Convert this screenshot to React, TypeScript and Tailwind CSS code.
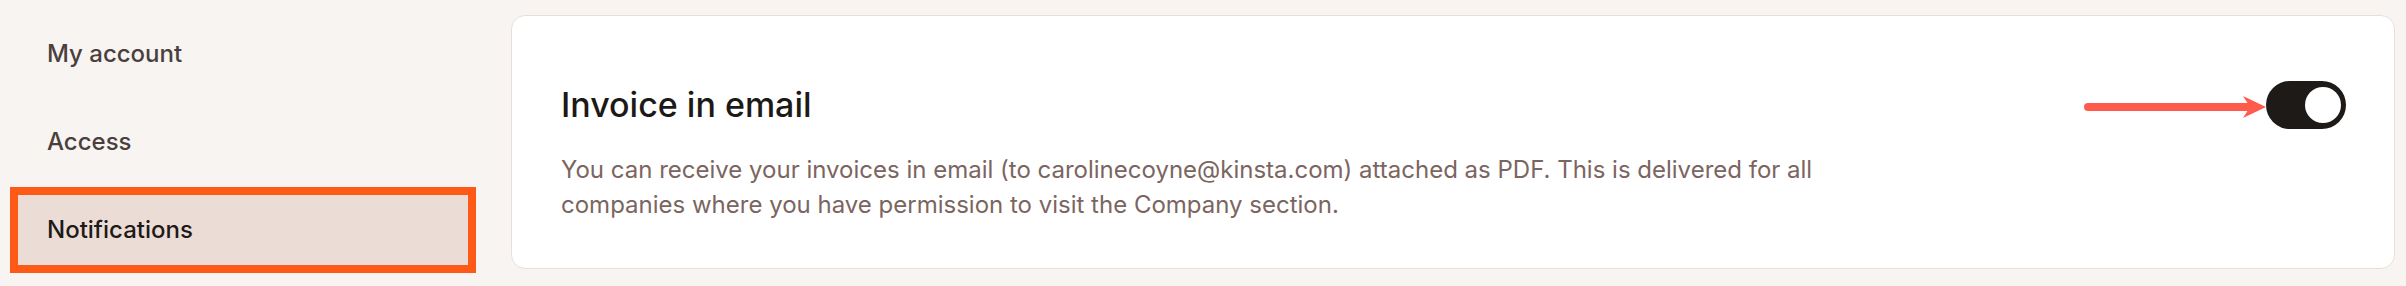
import React from "react";

export default function App() {
  return (
    <div className="flex min-h-[286px] w-full bg-[#f8f4f1] font-['Inter','Noto_Sans',sans-serif]">
      <nav className="flex w-[468px] shrink-0 flex-col gap-[18px] pl-[18px] pt-[19px]">
        <div className="flex h-[70px] items-center pl-[29px] text-[24px] font-medium text-[#4a3f3d]">
          My account
        </div>
        <div className="flex h-[70px] items-center pl-[29px] text-[24px] font-medium text-[#4a3f3d]">
          Access
        </div>
        <div className="flex h-[70px] items-center bg-[#ebddd6] pl-[29px] text-[24px] font-medium text-[#1e1a18] ring-8 ring-[#fd5a17]">
          Notifications
        </div>
      </nav>
      <div className="ml-[43px] mr-[11px] flex-1 py-[15px]">
        <div className="h-[254px] rounded-[14px] border border-[#eadfd8] bg-white pl-[49px] pr-[48px] pt-[65px]">
          <div className="flex h-[48px] items-center justify-between">
            <h2 className="text-[34px] font-medium leading-[48px] text-[#1c1917]">Invoice in email</h2>
            <div className="flex items-center">
              <svg width="182" height="48" viewBox="0 0 182 48" className="block">
                <line x1="4" y1="26" x2="168" y2="26" stroke="#ff5b4c" strokeWidth="8" strokeLinecap="round" />
                <path d="M182 26 L159 15 L166 26 L159 37 Z" fill="#ff5b4c" />
              </svg>
              <div className="flex h-[48px] w-[80px] items-center justify-end rounded-full bg-[#1e1a18] pr-[5px]">
                <div className="h-[36px] w-[36px] rounded-full bg-white" />
              </div>
            </div>
          </div>
          <p className="mt-[23px] max-w-[1290px] text-[24px] leading-[35px] text-[#7b6561]">
            You can receive your invoices in email (to carolinecoyne@kinsta.com) attached as PDF. This is delivered for all companies where you have permission to visit the Company section.
          </p>
        </div>
      </div>
    </div>
  );
}
